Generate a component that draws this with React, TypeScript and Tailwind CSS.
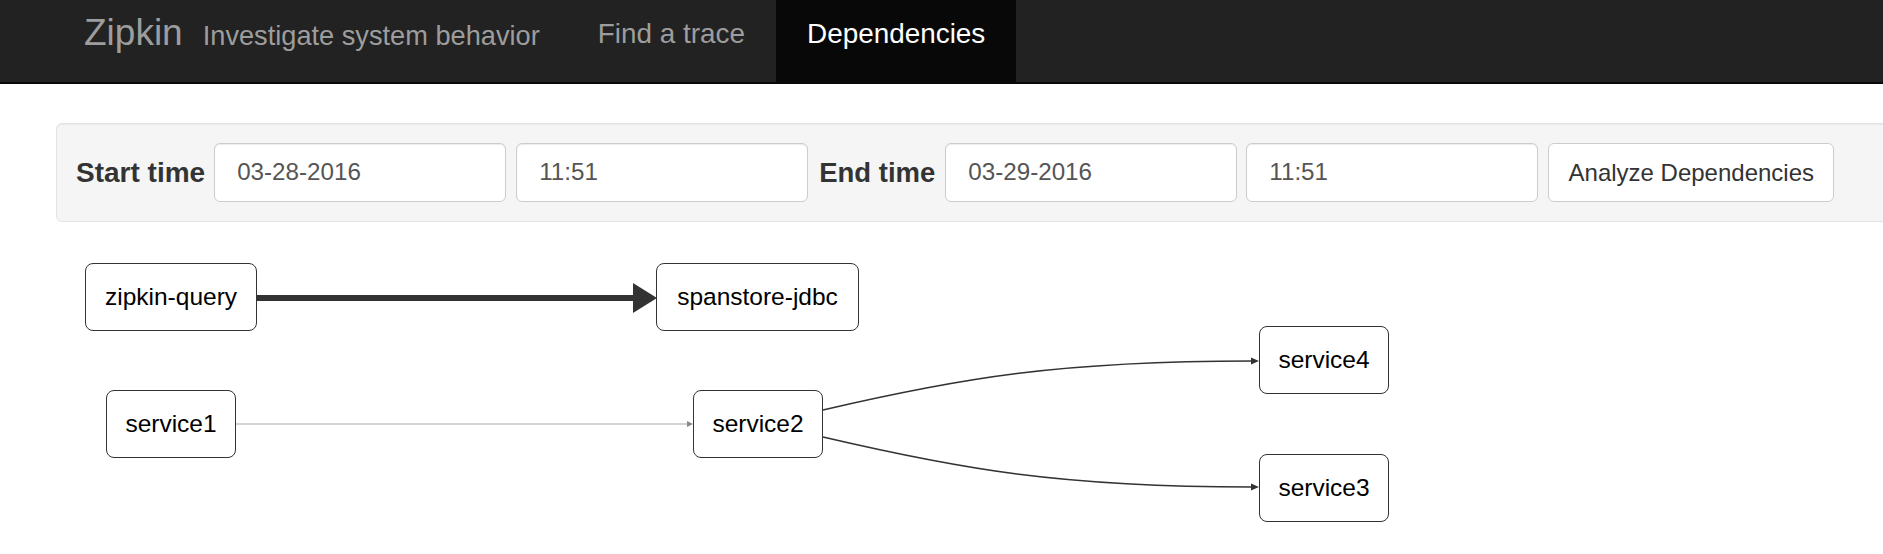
const nodes = [
  { name: "zipkin-query", x: 85, y: 41, w: 172 },
  { name: "spanstore-jdbc", x: 656, y: 41, w: 203 },
  { name: "service1", x: 106, y: 168, w: 130 },
  { name: "service2", x: 693, y: 168, w: 130 },
  { name: "service4", x: 1259, y: 104, w: 130 },
  { name: "service3", x: 1259, y: 232, w: 130 },
];

const Navbar = () => {
  return (
    <header className="h-[84px] bg-[#222] border-b-2 border-[#080808]">
      <nav className="h-[82px] flex items-start">
        <div className="flex items-baseline pl-[84px] pt-[14px]">
          <span className="text-[37px] leading-none text-[#9d9d9d]">Zipkin</span>
          <span className="ml-[20px] text-[27.2px] leading-none text-[#9d9d9d]">
            Investigate system behavior
          </span>
        </div>
        <ul className="flex ml-[27px]">
          <li>
            <a className="block h-[82px] px-[31px] pt-[20px] text-[27.9px] leading-none text-[#9d9d9d]">
              Find a trace
            </a>
          </li>
          <li>
            <a className="block h-[82px] px-[31px] pt-[20px] text-[27.9px] leading-none text-white bg-[#080808]">
              Dependencies
            </a>
          </li>
        </ul>
      </nav>
    </header>
  );
};

const inputCls =
  "w-[292px] h-[59px] flex items-center pl-[22px] bg-white border border-[#ccc] rounded-[6px] text-[24.2px] text-[#555] shadow-[inset_0_1px_1px_rgba(0,0,0,0.075)]";

const FilterPanel = () => {
  return (
    <div className="mt-[39px] ml-[56px] w-[1900px] bg-[#f5f5f5] border border-[#e3e3e3] rounded-[6px] py-[19px] pl-[19px] shadow-[inset_0_1px_1px_rgba(0,0,0,0.05)]">
      <div className="flex items-center">
        <label className="mr-[9px] text-[28px] font-bold text-[#333]">Start time</label>
        <div className={inputCls}>03-28-2016</div>
        <div className={`${inputCls} ml-[10px]`}>11:51</div>
        <label className="ml-[11px] mr-[10px] text-[27.5px] font-bold text-[#333]">End time</label>
        <div className={inputCls}>03-29-2016</div>
        <div className={`${inputCls} ml-[9px]`}>11:51</div>
        <button className="ml-[10px] w-[286px] h-[59px] bg-white border border-[#ccc] rounded-[6px] text-[24px] text-[#333]">
          Analyze Dependencies
        </button>
      </div>
    </div>
  );
};

const Graph = () => {
  return (
    <div className="relative h-[332px]">
      <svg className="absolute inset-0" width="1883" height="332">
        {/* zipkin-query -> spanstore-jdbc */}
        <line x1="257" y1="76" x2="634" y2="76" stroke="#333" strokeWidth="6" />
        <polygon points="633,61 657,76 633,91" fill="#333" />

        {/* service1 -> service2 */}
        <line x1="236" y1="202" x2="687" y2="202" stroke="#c4c4c4" strokeWidth="1.5" />
        <polygon points="687,199 693,202 687,205" fill="#888" />

        {/* service2 -> service4 */}
        <path d="M 823 188 C 960 156, 1060 139, 1252 139" fill="none" stroke="#333" strokeWidth="1.6" />
        <polygon points="1251,135.5 1259,139 1251,142.5" fill="#333" />

        {/* service2 -> service3 */}
        <path d="M 823 215 C 960 247, 1060 265, 1252 265" fill="none" stroke="#333" strokeWidth="1.6" />
        <polygon points="1251,261.5 1259,265 1251,268.5" fill="#333" />
      </svg>

      {nodes.map((n) => (
        <div
          key={n.name}
          className="absolute h-[68px] flex items-center justify-center bg-white border-[1.8px] border-[#333] rounded-[8px] text-[24.5px] text-black"
          style={{ left: n.x, top: n.y, width: n.w }}
        >
          {n.name}
        </div>
      ))}
    </div>
  );
};

export default function App() {
  return (
    <div
      className="w-full min-h-[554px] bg-white overflow-hidden"
      style={{ fontFamily: '"Liberation Sans", Arial, sans-serif' }}
    >
      <Navbar />
      <FilterPanel />
      <Graph />
    </div>
  );
}
